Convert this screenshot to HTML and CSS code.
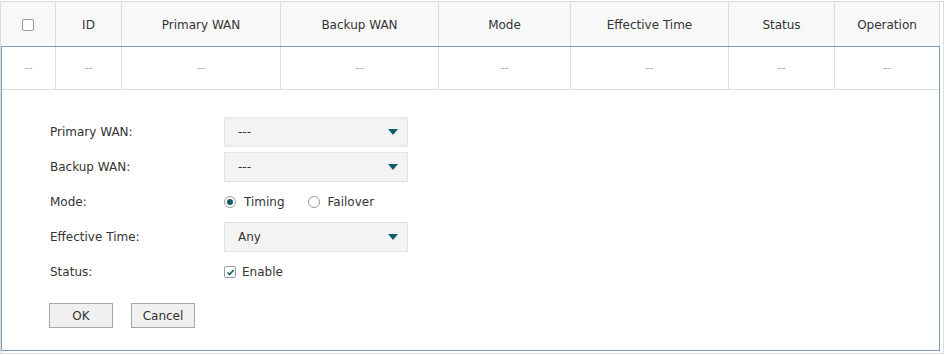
FILE: index.html
```html
<!DOCTYPE html>
<html lang="en">
<head>
    <meta charset="UTF-8">
    <meta name="viewport" content="width=device-width, initial-scale=1.0">
    <title>WAN Backup</title>
    <link rel="stylesheet" href="styles.css">
</head>
<body>
    <div class="wrap">
        <div class="grid head">
            <div class="cell"><span class="box"></span></div>
            <div class="cell">ID</div>
            <div class="cell">Primary WAN</div>
            <div class="cell">Backup WAN</div>
            <div class="cell">Mode</div>
            <div class="cell">Effective Time</div>
            <div class="cell">Status</div>
            <div class="cell">Operation</div>
        </div>
        <div class="edit">
            <div class="grid row">
                <div class="cell">--</div>
                <div class="cell">--</div>
                <div class="cell">--</div>
                <div class="cell">--</div>
                <div class="cell">--</div>
                <div class="cell">--</div>
                <div class="cell">--</div>
                <div class="cell">--</div>
            </div>
            <div class="form">
                <div class="field">
                    <label>Primary WAN:</label>
                    <div class="select">---<span class="arrow"></span></div>
                </div>
                <div class="field">
                    <label>Backup WAN:</label>
                    <div class="select">---<span class="arrow"></span></div>
                </div>
                <div class="field">
                    <label>Mode:</label>
                    <div class="options">
                        <span class="radio on"></span><span class="opt">Timing</span>
                        <span class="radio"></span><span class="opt">Failover</span>
                    </div>
                </div>
                <div class="field">
                    <label>Effective Time:</label>
                    <div class="select">Any<span class="arrow"></span></div>
                </div>
                <div class="field">
                    <label>Status:</label>
                    <div class="options">
                        <span class="box checked">
                            <svg width="9" height="9" viewBox="0 0 9 9"><path d="M1.5 4.5 L3.6 6.6 L7.6 2" fill="none" stroke="#0f5d6a" stroke-width="1.6"/></svg>
                        </span><span class="opt">Enable</span>
                    </div>
                </div>
                <div class="actions">
                    <button class="btn ok">OK</button>
                    <button class="btn">Cancel</button>
                </div>
            </div>
        </div>
    </div>
</body>
</html>
```

FILE: styles.css
```css
body {
    margin: 0;
    background: #fff;
    color: #333;
    font-family: "DejaVu Sans", Verdana, sans-serif;
    font-size: 12px;
}
.wrap {
    width: 944px;
    box-sizing: border-box;
    margin-top: 1px;
    border: 1px solid #ddd;
    padding: 0 3px 2px 0;
}
.grid {
    display: grid;
}
.head {
    grid-template-columns: 55px 66px 159px 158px 132px 158px 106px 105px;
    height: 44px;
    background: #f8f8f8;
}
.head .cell {
    padding-top: 2px;
    box-sizing: border-box;
}
.cell {
    display: flex;
    align-items: center;
    justify-content: center;
    border-right: 1px solid #ddd;
    white-space: nowrap;
}
.edit {
    border: 1px solid #7e9cb6;
}
.row {
    grid-template-columns: 54px 66px 159px 158px 132px 158px 106px 104px;
    height: 43px;
    border-bottom: 1px solid #ddd;
    box-sizing: border-box;
    color: #b0b0b0;
}
.row .cell:last-child {
    border-right: none;
}
.box {
    box-sizing: border-box;
    display: inline-flex;
    align-items: center;
    justify-content: center;
    width: 12px;
    height: 12px;
    border: 1px solid #999;
    border-radius: 2px;
    background: #fff;
}
.form {
    padding: 27px 0 22px 48px;
    display: flex;
    flex-direction: column;
    gap: 5px;
}
.field {
    display: flex;
    align-items: center;
    height: 30px;
}
.field label {
    width: 174px;
}
.select {
    position: relative;
    box-sizing: border-box;
    width: 184px;
    height: 30px;
    line-height: 28px;
    padding-left: 13px;
    background: #f3f3f3;
    border: 1px solid #e4e4e4;
}
.arrow {
    position: absolute;
    right: 9px;
    top: 11px;
    width: 0;
    height: 0;
    border-left: 5px solid transparent;
    border-right: 5px solid transparent;
    border-top: 6px solid #0f5d6a;
}
.options {
    display: flex;
    align-items: center;
}
.radio {
    box-sizing: border-box;
    width: 12px;
    height: 12px;
    border: 1px solid #999;
    border-radius: 50%;
    display: inline-flex;
    align-items: center;
    justify-content: center;
}
.radio.on::after {
    content: "";
    width: 6px;
    height: 6px;
    border-radius: 50%;
    background: #0f5d6a;
}
.opt {
    margin: 0 23px 0 8px;
}
.box.checked + .opt {
    margin-left: 6px;
}
.actions {
    display: flex;
    gap: 18px;
    margin: 11px 0 0 -1px;
}
.btn {
    font: inherit;
    color: #333;
    height: 25px;
    width: 64px;
    background: #f0f0f0;
    border: 1px solid #a6a6a6;
    padding: 0;
    cursor: pointer;
}
.btn:hover {
    background: #e6e6e6;
}
```
